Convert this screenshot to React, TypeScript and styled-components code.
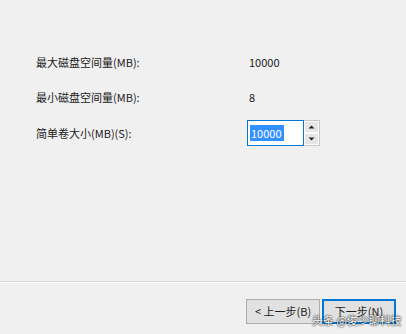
import React from "react";
import styled, { createGlobalStyle } from "styled-components";

const GlobalStyle = createGlobalStyle`
  html, body {
    margin: 0;
    padding: 0;
    background: #f0f0f0;
  }
`;

const Window = styled.div`
  position: relative;
  width: 406px;
  height: 334px;
  background: #f0f0f0;
  display: flex;
  flex-flow: column nowrap;
  font-family: "Microsoft YaHei UI", "Noto Sans CJK SC", "Noto Sans", sans-serif;
  font-size: 11px;
  color: #1a1a1a;
  overflow: hidden;
`;

const Content = styled.div`
  flex: 1;
  padding: 50px 0 0 36px;
  display: flex;
  flex-flow: column nowrap;
  gap: 11px;
`;

const Row = styled.div<{ $height: number }>`
  display: grid;
  grid-template-columns: 212px auto;
  align-items: center;
  height: ${(p) => p.$height}px;
`;

const Label = styled.span`
  line-height: 16px;
`;

const Value = styled.span`
  padding-left: 1px;
  line-height: 16px;
`;

const SpinBox = styled.div`
  display: flex;
  height: 26px;
  margin-left: -1px;
`;

const Input = styled.div`
  width: 53px;
  height: 24px;
  border: 1px solid #0078d7;
  background: #fff;
  display: flex;
  align-items: center;
  padding-left: 2px;
`;

const Selected = styled.span`
  background: #3390ff;
  color: #fff;
  line-height: 16px;
  padding: 0 2px 0 1px;
`;

const Spinner = styled.div`
  width: 15px;
  display: flex;
  flex-flow: column nowrap;
  border: 1px solid #c8c8c8;
  border-left: none;
  background: #f0f0f0;
`;

const SpinButton = styled.div`
  flex: 1;
  display: flex;
  align-items: center;
  justify-content: center;
  background: #e6e6e6;
  border: 1px solid #fbfbfb;
`;

const Footer = styled.div`
  border-top: 1px solid #d4d4d4;
  box-shadow: inset 0 1px 0 #fdfdfd;
  height: 53px;
  display: flex;
  justify-content: flex-end;
  align-items: flex-start;
  padding: 17px 10px 0 0;
  box-sizing: border-box;
  gap: 2px;
`;

const Button = styled.button<{ $primary?: boolean }>`
  width: 74px;
  height: 25px;
  font: inherit;
  line-height: 16px;
  color: #1a1a1a;
  background: #e1e1e1;
  border: 1px solid ${(p) => (p.$primary ? "#0078d7" : "#adadad")};
  box-shadow: ${(p) => (p.$primary ? "inset 0 0 0 1px #0078d7" : "none")};
  padding: 0 0 2px;
  white-space: nowrap;
`;

const Watermark = styled.div`
  position: absolute;
  left: 312px;
  top: 313px;
  font-size: 11px;
  line-height: 15px;
  white-space: nowrap;
  color: #fff;
  text-shadow: 0 0 2px rgba(0, 0, 0, 0.85), 0 0 1px rgba(0, 0, 0, 0.9);
`;

const Arrow = ({ up }: { up?: boolean }) => (
  <svg width="7" height="4" viewBox="0 0 7 4">
    <path d={up ? "M0.5 3.5 L3.5 0.5 L6.5 3.5 Z" : "M0.5 0.5 L3.5 3.5 L6.5 0.5 Z"} fill="#222" />
  </svg>
);

const App = () => {
  return (
    <>
      <GlobalStyle />
      <Window>
        <Content>
          <Row $height={24}>
            <Label>最大磁盘空间量(MB):</Label>
            <Value>10000</Value>
          </Row>
          <Row $height={24}>
            <Label>最小磁盘空间量(MB):</Label>
            <Value>8</Value>
          </Row>
          <Row $height={26}>
            <Label>简单卷大小(MB)(S):</Label>
            <SpinBox>
              <Input>
                <Selected>10000</Selected>
              </Input>
              <Spinner>
                <SpinButton>
                  <Arrow up />
                </SpinButton>
                <SpinButton>
                  <Arrow />
                </SpinButton>
              </Spinner>
            </SpinBox>
          </Row>
        </Content>
        <Footer>
          <Button>&lt; 上一步(B)</Button>
          <Button $primary>下一步(N)</Button>
        </Footer>
        <Watermark>头条 @俊少聊科技</Watermark>
      </Window>
    </>
  );
};

export default App;
